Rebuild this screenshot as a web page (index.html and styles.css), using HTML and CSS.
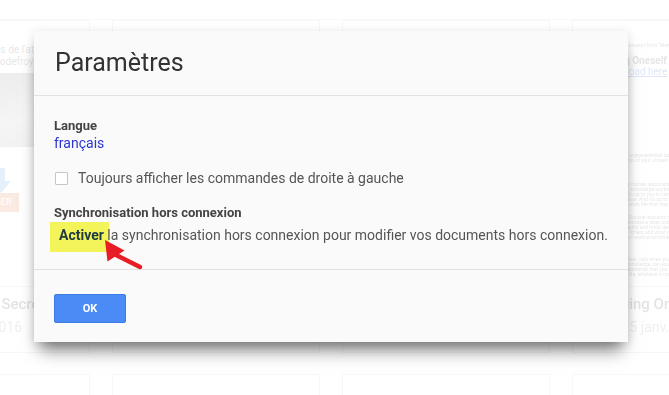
FILE: index.html
```html
<!DOCTYPE html>
<html lang="fr">
<head>
  <meta charset="UTF-8">
  <meta name="viewport" content="width=device-width, initial-scale=1.0">
  <title>Paramètres</title>
  <link rel="stylesheet" href="styles.css">
</head>
<body>

  <!-- Drive page behind the dialog -->
  <div class="drive">
    <div class="drive-bar"></div>
    <div class="drive-row">
      <div class="card">
        <div class="card-preview doc-left">
          <p class="doc-line">Mémoires de l'attaché</p>
          <p class="doc-line">Louise Godefroy</p>
          <div class="doc-photo"></div>
          <div class="doc-arrow"></div>
          <div class="doc-button">TÉLÉCHARGER</div>
        </div>
        <div class="card-info info-left">
          <div class="card-title">Les Principaux Secrets</div>
          <div class="card-date">Ouvert 15 janv. 2016</div>
        </div>
      </div>
      <div class="card">
        <div class="card-preview"></div>
        <div class="card-info"></div>
      </div>
      <div class="card">
        <div class="card-preview"></div>
        <div class="card-info"></div>
      </div>
      <div class="card">
        <div class="card-preview doc-right">
          <p class="doc-note">Peter F. Drucker, an excerpt from "Managing Oneself"</p>
          <p class="doc-title">Managing Oneself</p>
          <p class="doc-link">Download here</p>
          <p class="doc-text p1">We live in an age of unprecedented opportunity: if you have ambition and smarts, you can rise to the top of your chosen profession, regardless of where you started out.</p>
          <p class="doc-text p2">But with opportunity comes responsibility. Companies today aren't managing their employees' careers; knowledge workers must, effectively, be their own chief executive officers. It's up to you to carve out your place in the world and know when to change course. And it's up to you to keep yourself engaged and productive during a work life that may span some 50 years.</p>
          <p class="doc-text p3">In this article, Peter Drucker explains how to do all of these things well. To do so, you'll first need to cultivate a deep understanding of yourself by identifying your most valuable strengths and most dangerous weaknesses; articulating how you learn and work with others and what your most deeply held values are; and describing the type of work environment where you can make the greatest contribution.</p>
          <p class="doc-text p4">The implication is clear: only when you operate with a combination of your strengths and self-knowledge can you achieve true and lasting excellence. Managing yourself demands that you take responsibility for relationships and integrate corporate life, whatever it may hold for you.</p>
        </div>
        <div class="card-info info-right">
          <div class="card-title">Managing Oneself</div>
          <div class="card-date">Ouvert 15 janv. 2016</div>
        </div>
      </div>
    </div>
    <div class="drive-row">
      <div class="card"></div>
      <div class="card"></div>
      <div class="card"></div>
      <div class="card"></div>
    </div>
  </div>

  <!-- Settings dialog -->
  <div class="dialog">
    <div class="dialog-header">
      <h1>Paramètres</h1>
    </div>
    <div class="dialog-body">
      <div class="field-label">Langue</div>
      <a class="lang-link">français</a>
      <label class="checkbox-row">
        <span class="checkbox"></span>
        Toujours afficher les commandes de droite à gauche
      </label>
      <div class="field-label sync-label">Synchronisation hors connexion</div>
      <p class="sync-text"><span class="activer">Activer</span> la synchronisation hors connexion pour modifier vos documents hors connexion.</p>
    </div>
    <div class="dialog-footer">
      <button type="button" class="ok-btn">OK</button>
    </div>
  </div>

  <!-- Red annotation arrow -->
  <svg class="pointer" width="50" height="40" viewBox="0 0 50 40">
    <line x1="19" y1="22" x2="45" y2="35" stroke="#e81c24" stroke-width="4.5" stroke-linecap="round"/>
    <polygon points="10,8 12.5,29.5 29.5,18.5" fill="#e81c24"/>
  </svg>

</body>
</html>
```

FILE: styles.css
```css
/* Reset default styles */
* {
  margin: 0;
  padding: 0;
  box-sizing: border-box;
}

/* Body Styling */
body {
  position: relative;
  width: 669px;
  height: 395px;
  overflow: hidden;
  font-family: Roboto, Arial, sans-serif;
  background: #fff;
}

/* Faded Drive page */
.drive {
  opacity: 0.14;
}

.drive-bar {
  height: 20px;
  border-bottom: 1px solid #d0d0d0;
}

.drive-row {
  display: flex;
  gap: 22px;
  margin-left: -118px;
  margin-bottom: 21px;
}

.card {
  flex: none;
  display: flex;
  flex-direction: column;
  width: 208px;
  height: 333px;
  background: #fff;
  border: 1px solid #c0c0c0;
}

.card-preview {
  flex: 1;
  overflow: hidden;
}

.card-info {
  height: 66px;
  padding: 7px 16px 0;
  border-top: 1px solid #c8c8c8;
  white-space: nowrap;
}

.info-left .card-date {
  margin-left: -4px;
}

.info-right {
  padding-left: 10px;
}

.info-right .card-date {
  margin-left: -6px;
}

.card-title {
  font-size: 15px;
  line-height: 20px;
  font-weight: 500;
  color: #333;
}

.card-date {
  margin-top: 3px;
  font-size: 14px;
  line-height: 20px;
  color: #888;
}

/* Left document preview */
.doc-left {
  padding: 23px 0 0 78px;
}

.doc-line {
  font-size: 10px;
  line-height: 12px;
  color: #444;
  white-space: nowrap;
}

.doc-photo {
  width: 120px;
  height: 74px;
  margin: 5px 0 0 -8px;
  background: linear-gradient(160deg, #6a6a6a, #b5b5b5 60%, #8a8a8a);
}

.doc-arrow {
  position: relative;
  width: 16px;
  height: 25px;
  margin: 21px 0 0 32px;
}

.doc-arrow::before {
  content: "";
  position: absolute;
  left: 4px;
  top: 0;
  width: 8px;
  height: 13px;
  background: #4a90e2;
}

.doc-arrow::after {
  content: "";
  position: absolute;
  left: -2px;
  top: 13px;
  border-left: 10px solid transparent;
  border-right: 10px solid transparent;
  border-top: 12px solid #4a90e2;
}

.doc-button {
  width: 76px;
  height: 19px;
  margin-left: -18px;
  font-size: 9px;
  line-height: 19px;
  text-align: center;
  color: #fff;
  background: #e0662e;
}

/* Right document preview */
.doc-right {
  padding: 21px 12px 0;
  color: #444;
}

.doc-note {
  font-size: 5px;
  line-height: 6px;
  white-space: nowrap;
}

.doc-title {
  margin-top: 7px;
  font-size: 10px;
  line-height: 12px;
  font-weight: bold;
}

.doc-link {
  padding-left: 16px;
  font-size: 10px;
  line-height: 10px;
  color: #15c;
  text-decoration: underline;
}

.doc-text {
  font-size: 5px;
  line-height: 5px;
}

.p1 { margin-top: 76px; }
.p2 { margin-top: 14px; }
.p3 { margin-top: 8px; }
.p4 { margin-top: 12px; }

/* Dialog */
.dialog {
  position: absolute;
  left: 34px;
  top: 31px;
  z-index: 1;
  width: 594px;
  background: #fafafa;
  box-shadow: 0 2px 10px rgba(0, 0, 0, 0.14), 0 14px 16px -6px rgba(0, 0, 0, 0.5);
}

.dialog-header {
  height: 65px;
  padding: 17px 21px 0;
  border-bottom: 1px solid #e2e2e2;
}

.dialog-header h1 {
  font-size: 25px;
  line-height: 30px;
  font-weight: normal;
  color: #333;
}

.dialog-body {
  padding: 21px 20px 25px;
  border-bottom: 1px solid #e2e2e2;
}

.field-label {
  font-size: 13px;
  line-height: 17px;
  font-weight: bold;
  color: #444;
}

.lang-link {
  display: block;
  font-size: 14px;
  line-height: 18px;
  color: #2a36cf;
}

.checkbox-row {
  display: flex;
  align-items: center;
  gap: 10px;
  margin-top: 17px;
  font-size: 14px;
  line-height: 18px;
  color: #555;
}

.checkbox {
  width: 13px;
  height: 13px;
  margin: 1px 0 0 1px;
  background: #fff;
  border: 1px solid #c6c6c6;
  border-radius: 1px;
}

.sync-label {
  margin-top: 17px;
}

.sync-text {
  margin-top: 5px;
  font-size: 14px;
  line-height: 18px;
  color: #555;
}

/* Yellow highlight on "Activer" */
.activer {
  position: relative;
  margin-left: 5px;
  font-weight: bold;
  color: #1d3b40;
}

.activer::before {
  content: "";
  position: absolute;
  left: -9px;
  right: -5px;
  top: -5px;
  bottom: -9px;
  z-index: -1;
  background: #f3f35a;
}

.dialog-footer {
  padding: 24px 20px 19px;
}

.ok-btn {
  display: block;
  width: 72px;
  height: 29px;
  font-family: Roboto, Arial, sans-serif;
  font-size: 11px;
  font-weight: bold;
  color: #fff;
  background: #4a8bf5;
  border: 1px solid #3b7be8;
  border-radius: 2px;
}

/* Red arrow annotation */
.pointer {
  position: absolute;
  left: 95px;
  top: 232px;
  z-index: 2;
}
```
